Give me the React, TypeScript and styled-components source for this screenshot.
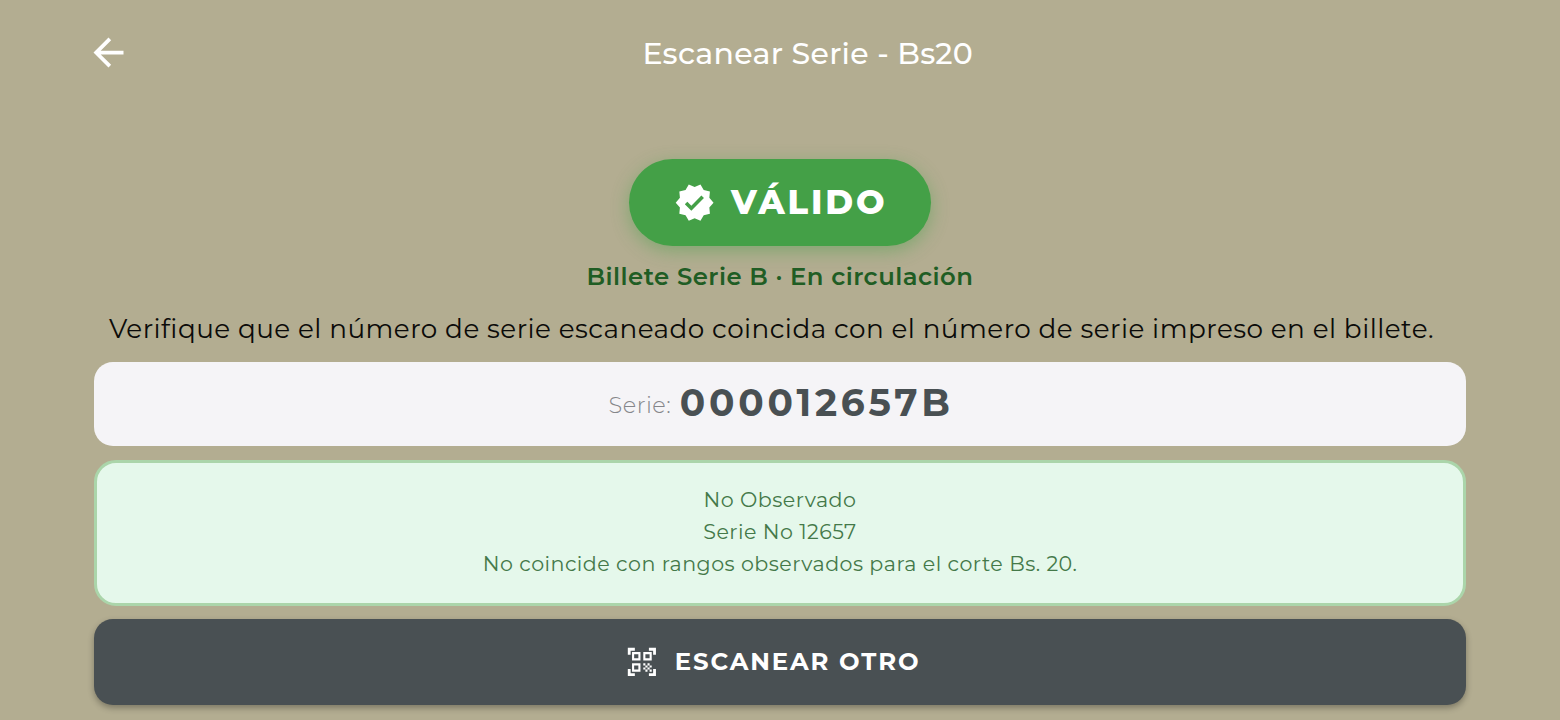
import React from 'react';
import styled, {createGlobalStyle} from 'styled-components';
import {MdArrowBack, MdQrCodeScanner, MdVerified} from 'react-icons/md';


const theme = {
    font: "Montserrat, 'Open Sans', 'Noto Sans', sans-serif",
    background: '#b3ad91',
    valid: '#44a047',
    dark: '#495053',
};


const GlobalStyle = createGlobalStyle`
  * {
    box-sizing: border-box;
  }

  body {
    margin: 0;
    background: ${theme.background};
    font-family: ${theme.font};
  }
`


function App() {
    return (
        <StyledPage>
            <GlobalStyle/>
            <StyledHeader>
                <StyledBack aria-label="Volver">
                    <MdArrowBack size={45}/>
                </StyledBack>
                <StyledTitle>Escanear Serie - Bs20</StyledTitle>
            </StyledHeader>

            <StyledBadge>
                <MdVerified size={41.25}/>
                <StyledBadgeText>VÁLIDO</StyledBadgeText>
            </StyledBadge>

            <StyledStatus>Billete Serie B · En circulación</StyledStatus>
            <StyledHint>
                Verifique que el número de serie escaneado coincida con el número de serie impreso en el billete.
            </StyledHint>

            <StyledSerial>
                <StyledSerialLabel>Serie:</StyledSerialLabel>
                <StyledSerialNumber>000012657B</StyledSerialNumber>
            </StyledSerial>

            <StyledResult>
                <span>No Observado</span>
                <span>Serie No 12657</span>
                <span>No coincide con rangos observados para el corte Bs. 20.</span>
            </StyledResult>

            <StyledButton>
                <MdQrCodeScanner size={33.75}/>
                <StyledButtonText>ESCANEAR OTRO</StyledButtonText>
            </StyledButton>
        </StyledPage>
    );
}

export default App;


const StyledPage = styled.main`
  width: 1560px;
  height: 720px;
  padding: 0 94px;
  overflow: hidden;
  display: flex;
  flex-direction: column;
  align-items: center;
  white-space: nowrap;
  background: ${theme.background};
`

const StyledHeader = styled.header`
  width: 100%;
  height: 105px;
  display: flex;
  align-items: center;
  color: #fff;
`

const StyledBack = styled.button`
  display: flex;
  margin-left: -8.5px;
  padding: 0;
  border: 0;
  color: inherit;
  background: none;
`

const StyledTitle = styled.h1`
  flex: 1;
  margin: 0;
  padding: 2px 0 0 19px;
  font-size: 30px;
  font-weight: 500;
  letter-spacing: 0.28px;
  text-align: center;
`

const StyledBadge = styled.div`
  height: 86.5px;
  margin-top: 54px;
  padding: 0 43.5px 0 45px;
  border-radius: 44px;
  display: flex;
  align-items: center;
  gap: 15.5px;
  color: #fff;
  background: ${theme.valid};
  box-shadow: 0 5px 18px rgba(67, 160, 71, 0.45);
`

const StyledBadgeText = styled.strong`
  padding-bottom: 2px;
  font-size: 33.75px;
  font-weight: 800;
  letter-spacing: 2.8px;
`

const StyledStatus = styled.div`
  height: 61.5px;
  font-size: 24.375px;
  font-weight: 600;
  line-height: 60px;
  letter-spacing: 0.47px;
  color: #205d24;
`

const StyledHint = styled.p`
  width: 100%;
  height: 55px;
  margin: 0;
  padding-left: 15px;
  font-size: 26.25px;
  line-height: 44px;
  letter-spacing: 0.47px;
  color: #0b0b09;
`

const StyledSerial = styled.div`
  width: 100%;
  height: 84px;
  padding-left: 2px;
  border-radius: 19px;
  display: flex;
  align-items: center;
  justify-content: center;
  gap: 8.5px;
  background: #f5f4f7;
`

const StyledSerialLabel = styled.span`
  padding-top: 2px;
  font-size: 22.5px;
  font-weight: 300;
  letter-spacing: 0.55px;
  color: #85868a;
`

const StyledSerialNumber = styled.strong`
  padding-bottom: 3px;
  font-size: 37.5px;
  font-weight: 700;
  letter-spacing: 3.75px;
  color: ${theme.dark};
`

const StyledResult = styled.div`
  width: 100%;
  height: 146px;
  margin: 14px 0 13px;
  padding-bottom: 2px;
  border: 3px solid #abd5aa;
  border-radius: 22px;
  display: flex;
  flex-direction: column;
  align-items: center;
  justify-content: center;
  font-size: 20.625px;
  line-height: 32px;
  letter-spacing: 0.47px;
  color: #447949;
  background: #e5f8eb;
`

const StyledButton = styled.button`
  width: 100%;
  height: 86px;
  padding: 0 15px 0 0;
  border: 0;
  border-radius: 19px;
  display: flex;
  align-items: center;
  justify-content: center;
  gap: 16.5px;
  font-family: inherit;
  font-size: 24.375px;
  font-weight: 700;
  letter-spacing: 1.875px;
  color: #fff;
  background: ${theme.dark};
  box-shadow: 0 3px 6px rgba(0, 0, 0, 0.3);
`

const StyledButtonText = styled.span`
  padding-bottom: 2px;
`
